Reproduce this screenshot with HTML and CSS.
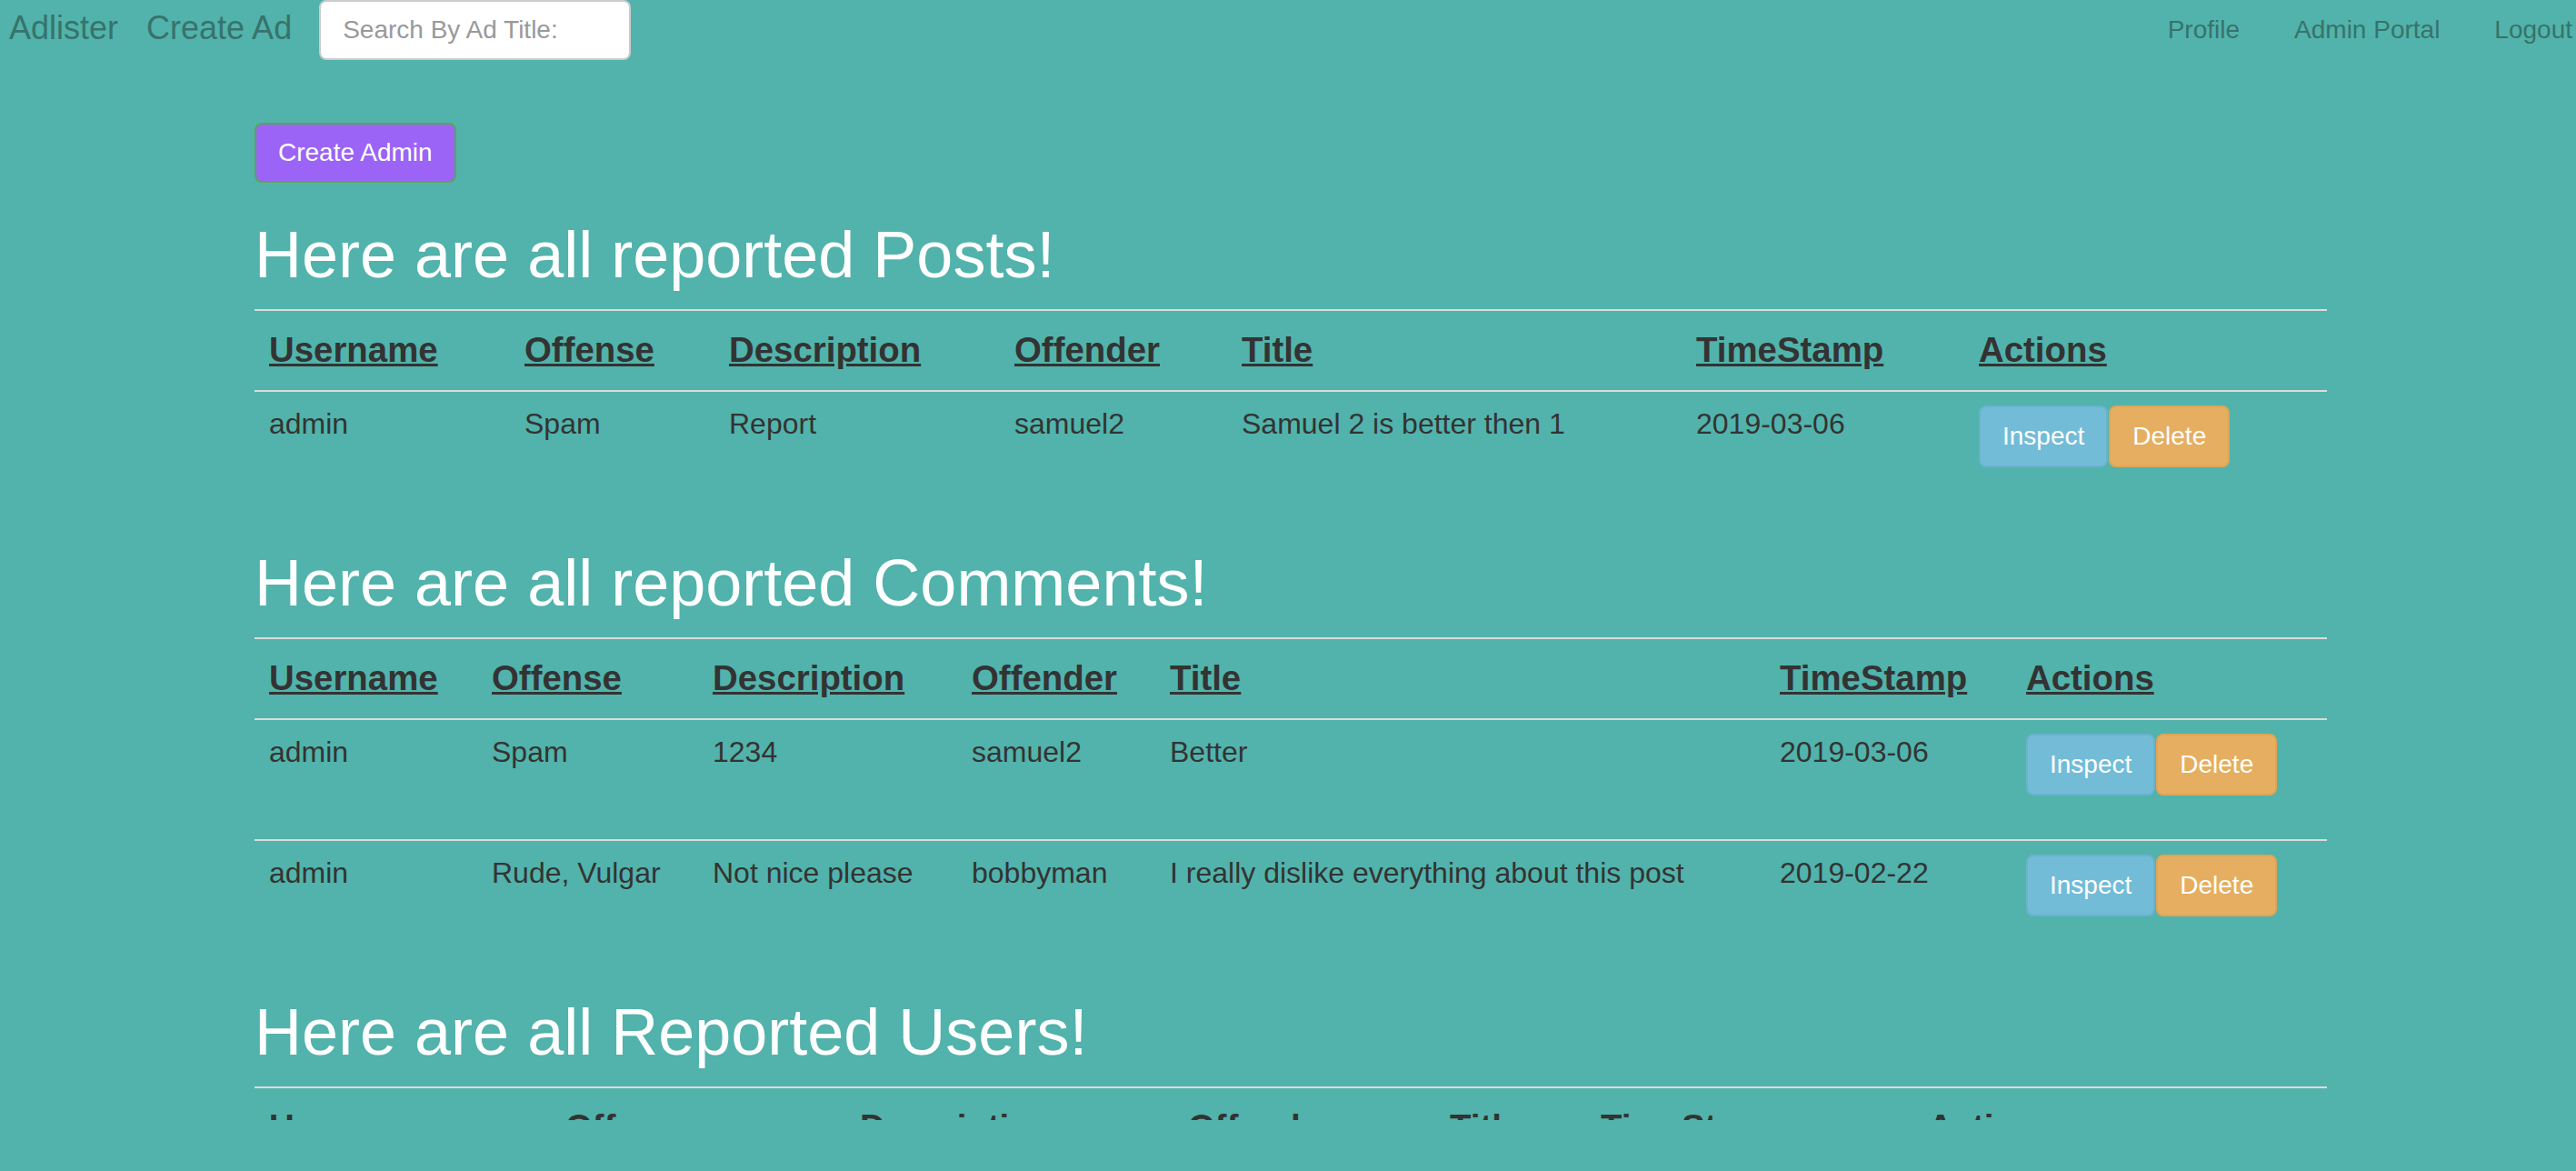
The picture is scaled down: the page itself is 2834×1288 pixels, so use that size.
FILE: index.html
```html
<!DOCTYPE html>
<html lang="en">
<head>
<meta charset="utf-8">
<title>Adlister - Admin Portal</title>
<link rel="stylesheet" href="styles.css">
</head>
<body>
<div class="page">
  <nav class="navbar">
    <div class="nav-left">
      <a class="brand" href="#">Adlister</a>
      <a class="brand" href="#">Create Ad</a>
      <input class="search" type="text" placeholder="Search By Ad Title:">
    </div>
    <div class="nav-right">
      <a class="nav-link" href="#">Profile</a>
      <a class="nav-link" href="#">Admin Portal</a>
      <a class="nav-link" href="#">Logout</a>
    </div>
  </nav>

  <main class="container">
    <button class="btn btn-purple" type="button">Create Admin</button>

    <h1>Here are all reported Posts!</h1>
    <table class="report posts">
      <colgroup>
        <col class="c1"><col class="c2"><col class="c3"><col class="c4"><col class="c5"><col class="c6"><col class="c7">
      </colgroup>
      <thead>
        <tr><th>Username</th><th>Offense</th><th>Description</th><th>Offender</th><th>Title</th><th>TimeStamp</th><th>Actions</th></tr>
      </thead>
      <tbody>
        <tr>
          <td>admin</td><td>Spam</td><td>Report</td><td>samuel2</td><td>Samuel 2 is better then 1</td><td>2019-03-06</td>
          <td><div class="actions"><button class="btn btn-info" type="button">Inspect</button><button class="btn btn-warning" type="button">Delete</button></div></td>
        </tr>
      </tbody>
    </table>

    <h1>Here are all reported Comments!</h1>
    <table class="report comments">
      <colgroup>
        <col class="c1"><col class="c2"><col class="c3"><col class="c4"><col class="c5"><col class="c6"><col class="c7">
      </colgroup>
      <thead>
        <tr><th>Username</th><th>Offense</th><th>Description</th><th>Offender</th><th>Title</th><th>TimeStamp</th><th>Actions</th></tr>
      </thead>
      <tbody>
        <tr>
          <td>admin</td><td>Spam</td><td>1234</td><td>samuel2</td><td>Better</td><td>2019-03-06</td>
          <td><div class="actions"><button class="btn btn-info" type="button">Inspect</button><button class="btn btn-warning" type="button">Delete</button></div></td>
        </tr>
        <tr>
          <td>admin</td><td>Rude, Vulgar</td><td>Not nice please</td><td>bobbyman</td><td>I really dislike everything about this post</td><td>2019-02-22</td>
          <td><div class="actions"><button class="btn btn-info" type="button">Inspect</button><button class="btn btn-warning" type="button">Delete</button></div></td>
        </tr>
      </tbody>
    </table>

    <h1>Here are all Reported Users!</h1>
    <table class="report users">
      <colgroup>
        <col class="c1"><col class="c2"><col class="c3"><col class="c4"><col class="c5"><col class="c6"><col class="c7">
      </colgroup>
      <thead>
        <tr><th>Username</th><th>Offense</th><th>Description</th><th>Offender</th><th>Title</th><th>TimeStamp</th><th>Actions</th></tr>
      </thead>
      <tbody>
        <tr>
          <td>admin</td><td>Spam</td><td>Report</td><td>samuel2</td><td>User</td><td>2019-03-06</td>
          <td><div class="actions"><button class="btn btn-info" type="button">Inspect</button><button class="btn btn-warning" type="button">Delete</button></div></td>
        </tr>
      </tbody>
    </table>
  </main>
</div>
</body>
</html>
```

FILE: styles.css
```css
* {
  box-sizing: border-box;
}

html, body {
  margin: 0;
  padding: 0;
}

body {
  background: #51b3ab;
  color: #333333;
  font-family: "Liberation Sans", Arial, Helvetica, sans-serif;
  font-size: 32px;
}

.page {
  height: 1232px;
  overflow: hidden;
}

/* ---------- navbar ---------- */
.navbar {
  display: flex;
  justify-content: space-between;
  align-items: flex-start;
  height: 70px;
}

.nav-left {
  display: flex;
  align-items: flex-start;
  padding-left: 10px;
}

.brand {
  font-size: 36px;
  line-height: 40px;
  padding-top: 11px;
  color: #37736c;
  text-decoration: none;
  margin-right: 31px;
}

.search {
  width: 343px;
  height: 66px;
  margin-left: -1px;
  padding: 0 24px;
  border: 2px solid #cccccc;
  border-radius: 8px;
  background: #ffffff;
  font-family: "Liberation Sans", Arial, Helvetica, sans-serif;
  font-size: 28px;
  color: #555555;
  outline: none;
}

.search::placeholder {
  color: #999999;
}

.nav-right {
  display: flex;
  gap: 60px;
  padding-right: 4px;
}

.nav-link {
  font-size: 28px;
  line-height: 40px;
  padding-top: 13px;
  color: #37736c;
  text-decoration: none;
}

/* ---------- content ---------- */
.container {
  width: 2280px;
  margin-left: 280px;
  padding-top: 65px;
}

h1 {
  font-size: 72px;
  line-height: 81px;
  font-weight: normal;
  color: #ffffff;
  margin: 39px 0 19px;
}

.btn {
  display: inline-block;
  font-family: "Liberation Sans", Arial, Helvetica, sans-serif;
  font-size: 28px;
  line-height: 40px;
  padding: 12px 24px;
  border: 2px solid transparent;
  border-radius: 8px;
  color: #ffffff;
  cursor: pointer;
  white-space: nowrap;
}

.btn-purple {
  background: #9b64f6;
  border-color: #5aa45c;
  line-height: 38px;
}

.btn-info {
  background: #73bcd8;
  border-color: #68b3cf;
}

.btn-warning {
  background: #e6ae60;
  border-color: #dea556;
}

/* ---------- tables ---------- */
.report {
  width: 2280px;
  table-layout: fixed;
  border-collapse: separate;
  border-spacing: 0;
}

.report th,
.report td {
  text-align: left;
  vertical-align: top;
  border-top: 2px solid #dcdcdc;
  white-space: nowrap;
}

.report th {
  font-size: 38.4px;
  line-height: 54.86px;
  font-weight: bold;
  text-decoration: underline;
  padding: 16px;
}

.report td {
  font-size: 32px;
  line-height: 40px;
  padding: 15px 16px 16px;
}

.actions {
  display: flex;
  gap: 1px;
  height: 100px;
  align-items: flex-start;
}

/* column widths per table */
.posts .c1 { width: 281px; }
.posts .c2 { width: 225px; }
.posts .c3 { width: 314px; }
.posts .c4 { width: 250px; }
.posts .c5 { width: 500px; }
.posts .c6 { width: 311px; }
.posts .c7 { width: 399px; }

.comments .c1 { width: 245px; }
.comments .c2 { width: 243px; }
.comments .c3 { width: 285px; }
.comments .c4 { width: 218px; }
.comments .c5 { width: 671px; }
.comments .c6 { width: 271px; }
.comments .c7 { width: 347px; }

.users .c1 { width: 326px; }
.users .c2 { width: 324px; }
.users .c3 { width: 361px; }
.users .c4 { width: 288px; }
.users .c5 { width: 166px; }
.users .c6 { width: 360px; }
.users .c7 { width: 455px; }
```
